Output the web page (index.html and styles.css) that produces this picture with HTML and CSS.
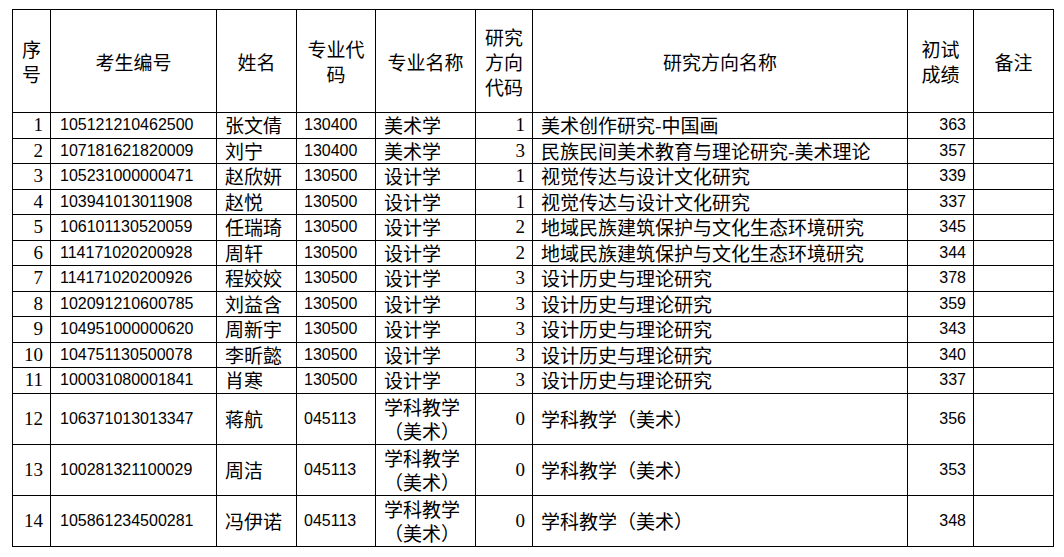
FILE: index.html
```html
<!DOCTYPE html>
<html lang="zh-CN">
<head>
<meta charset="utf-8">
<title>名单</title>
<link rel="stylesheet" href="styles.css">
</head>
<body>
<table class="list">
  <colgroup>
    <col class="c1"><col class="c2"><col class="c3"><col class="c4"><col class="c5"><col class="c6"><col class="c7"><col class="c8"><col class="c9">
  </colgroup>
  <thead>
    <tr class="head">
      <th>序<br>号</th>
      <th>考生编号</th>
      <th>姓名</th>
      <th>专业代<br>码</th>
      <th>专业名称</th>
      <th>研究<br>方向<br>代码</th>
      <th>研究方向名称</th>
      <th>初试<br>成绩</th>
      <th>备注</th>
    </tr>
  </thead>
  <tbody>
    <tr><td class="seq">1</td><td class="id">105121210462500</td><td class="cn">张文倩</td><td class="code">130400</td><td class="cn">美术学</td><td class="seq">1</td><td class="cn">美术创作研究-中国画</td><td class="score">363</td><td></td></tr>
    <tr><td class="seq">2</td><td class="id">107181621820009</td><td class="cn">刘宁</td><td class="code">130400</td><td class="cn">美术学</td><td class="seq">3</td><td class="cn">民族民间美术教育与理论研究-美术理论</td><td class="score">357</td><td></td></tr>
    <tr><td class="seq">3</td><td class="id">105231000000471</td><td class="cn">赵欣妍</td><td class="code">130500</td><td class="cn">设计学</td><td class="seq">1</td><td class="cn">视觉传达与设计文化研究</td><td class="score">339</td><td></td></tr>
    <tr><td class="seq">4</td><td class="id">103941013011908</td><td class="cn">赵悦</td><td class="code">130500</td><td class="cn">设计学</td><td class="seq">1</td><td class="cn">视觉传达与设计文化研究</td><td class="score">337</td><td></td></tr>
    <tr><td class="seq">5</td><td class="id">106101130520059</td><td class="cn">任瑞琦</td><td class="code">130500</td><td class="cn">设计学</td><td class="seq">2</td><td class="cn">地域民族建筑保护与文化生态环境研究</td><td class="score">345</td><td></td></tr>
    <tr><td class="seq">6</td><td class="id">114171020200928</td><td class="cn">周轩</td><td class="code">130500</td><td class="cn">设计学</td><td class="seq">2</td><td class="cn">地域民族建筑保护与文化生态环境研究</td><td class="score">344</td><td></td></tr>
    <tr><td class="seq">7</td><td class="id">114171020200926</td><td class="cn">程姣姣</td><td class="code">130500</td><td class="cn">设计学</td><td class="seq">3</td><td class="cn">设计历史与理论研究</td><td class="score">378</td><td></td></tr>
    <tr><td class="seq">8</td><td class="id">102091210600785</td><td class="cn">刘益含</td><td class="code">130500</td><td class="cn">设计学</td><td class="seq">3</td><td class="cn">设计历史与理论研究</td><td class="score">359</td><td></td></tr>
    <tr><td class="seq">9</td><td class="id">104951000000620</td><td class="cn">周新宇</td><td class="code">130500</td><td class="cn">设计学</td><td class="seq">3</td><td class="cn">设计历史与理论研究</td><td class="score">343</td><td></td></tr>
    <tr><td class="seq">10</td><td class="id">104751130500078</td><td class="cn">李昕懿</td><td class="code">130500</td><td class="cn">设计学</td><td class="seq">3</td><td class="cn">设计历史与理论研究</td><td class="score">340</td><td></td></tr>
    <tr><td class="seq">11</td><td class="id">100031080001841</td><td class="cn">肖寒</td><td class="code">130500</td><td class="cn">设计学</td><td class="seq">3</td><td class="cn">设计历史与理论研究</td><td class="score">337</td><td></td></tr>
    <tr class="tall"><td class="seq">12</td><td class="id">106371013013347</td><td class="cn">蒋航</td><td class="code">045113</td><td class="cn">学科教学（美术）</td><td class="seq">0</td><td class="cn">学科教学（美术）</td><td class="score">356</td><td></td></tr>
    <tr class="tall"><td class="seq">13</td><td class="id">100281321100029</td><td class="cn">周洁</td><td class="code">045113</td><td class="cn">学科教学（美术）</td><td class="seq">0</td><td class="cn">学科教学（美术）</td><td class="score">353</td><td></td></tr>
    <tr class="tall"><td class="seq">14</td><td class="id">105861234500281</td><td class="cn">冯伊诺</td><td class="code">045113</td><td class="cn">学科教学（美术）</td><td class="seq">0</td><td class="cn">学科教学（美术）</td><td class="score">348</td><td></td></tr>
  </tbody>
</table>
</body>
</html>
```

FILE: styles.css
```css
html, body {
  margin: 0;
  padding: 0;
  background: #ffffff;
}

body {
  padding: 9px 0 0 12px;
  font-family: "Noto Sans CJK SC", sans-serif;
  color: #000000;
}

.list {
  border-collapse: collapse;
  table-layout: fixed;
  width: 1041px;
}

.c1 { width: 38px; }
.c2 { width: 166px; }
.c3 { width: 80px; }
.c4 { width: 79px; }
.c5 { width: 100px; }
.c6 { width: 57px; }
.c7 { width: 375px; }
.c8 { width: 66px; }
.c9 { width: 80px; }

.list th,
.list td {
  border: 1px solid #000000;
  padding: 0 8px;
  vertical-align: middle;
  font-size: 19px;
  line-height: 22px;
  font-weight: normal;
  overflow: hidden;
  white-space: nowrap;
}

.list th {
  text-align: center;
  padding: 0;
  line-height: 25px;
}

.head {
  height: 103px;
}

.list tbody tr {
  height: 25.5px;
}

.list tbody tr.tall {
  height: 51px;
}

.list tbody tr.tall td {
  line-height: 24px;
}

.list td.cn {
  white-space: normal;
  text-align: left;
  padding-left: 8px;
  padding-right: 2px;
}

.list td.seq {
  text-align: right;
  font-family: "Liberation Serif", serif;
  font-size: 19px;
  padding-right: 7px;
}

.list td.id {
  font-family: "Liberation Sans", sans-serif;
  font-size: 16px;
  padding-left: 9px;
}

.list td.code {
  font-family: "Liberation Sans", sans-serif;
  font-size: 16px;
  padding-left: 7px;
}

.list td.score {
  text-align: right;
  font-family: "Liberation Sans", sans-serif;
  font-size: 16px;
  padding-right: 7px;
}
```
